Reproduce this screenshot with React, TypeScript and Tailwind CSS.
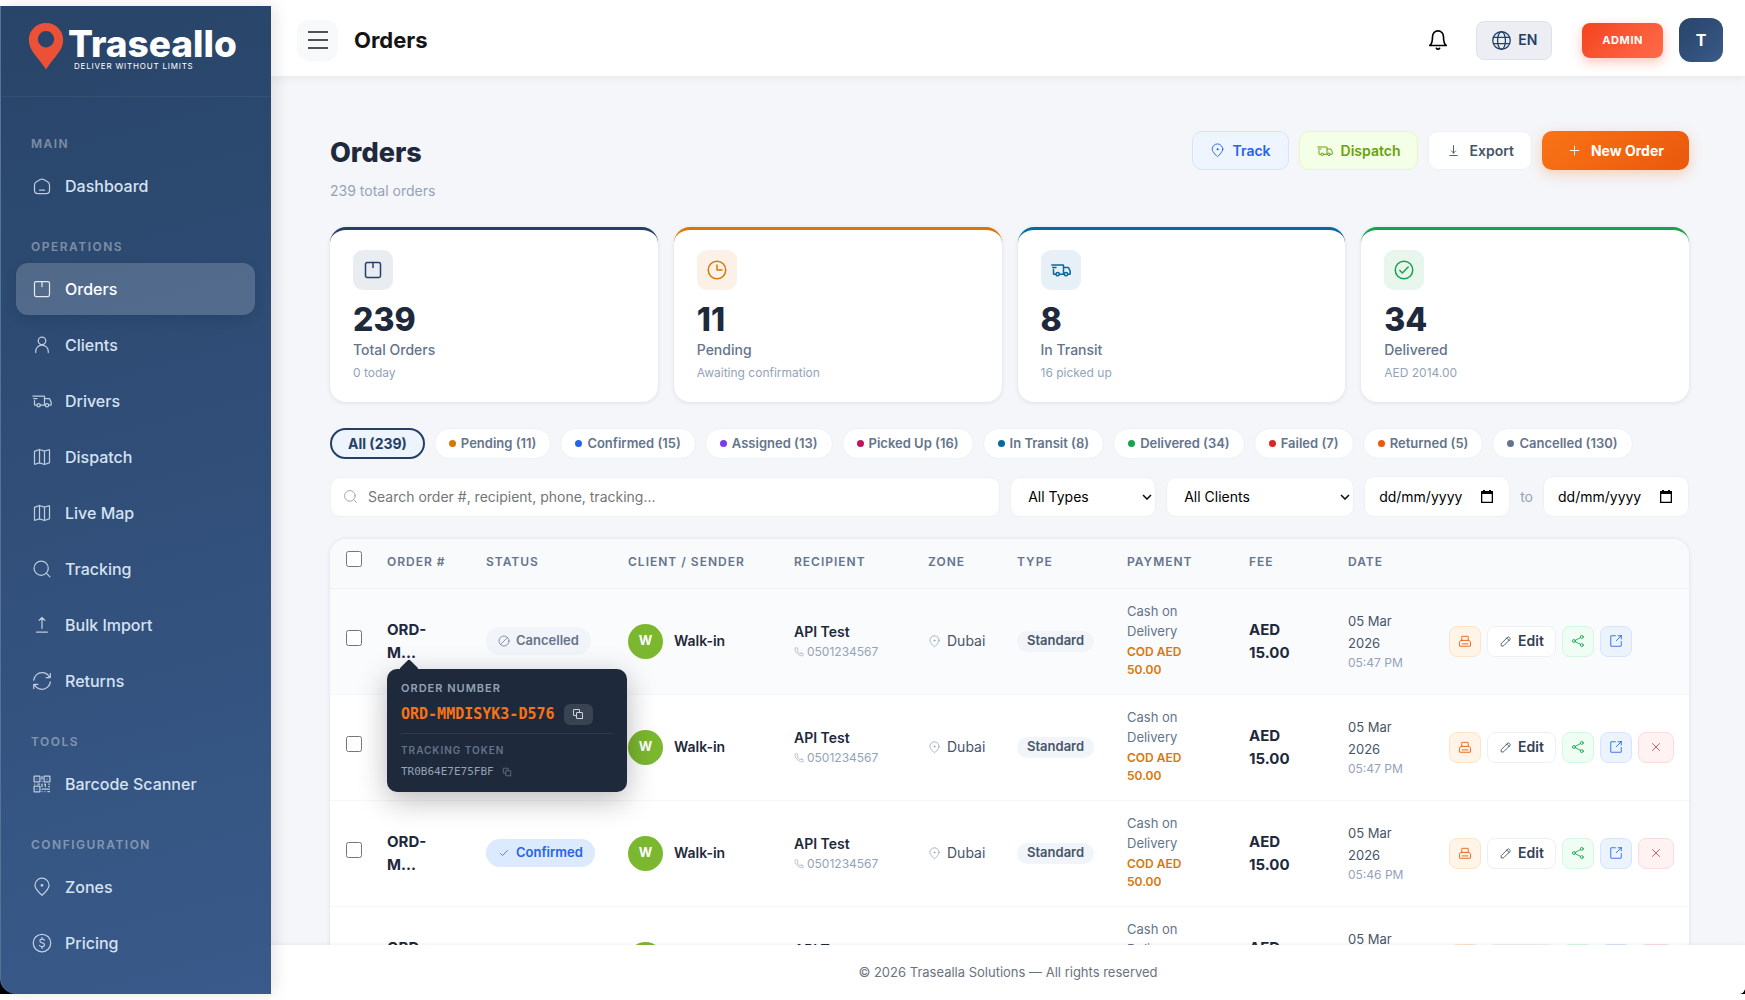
import { useState } from "react";
import type { ReactNode } from "react";

type IconProps = { className?: string; children?: ReactNode; strokeWidth?: number };

function Icon({ className = "size-5", strokeWidth = 1.5, children }: IconProps) {
  return (
    <svg
      viewBox="0 0 24 24"
      fill="none"
      stroke="currentColor"
      strokeWidth={strokeWidth}
      strokeLinecap="round"
      strokeLinejoin="round"
      aria-hidden="true"
      className={`shrink-0 ${className}`}
    >
      {children}
    </svg>
  );
}

const HomeIcon = (p: IconProps) => (
  <Icon {...p}>
    <path d="M17 21H7a4 4 0 0 1-4-4v-6.292a4 4 0 0 1 1.927-3.421l5-3.03a4 4 0 0 1 4.146 0l5 3.03A4 4 0 0 1 21 10.707V17a4 4 0 0 1-4 4ZM9 17h6" />
  </Icon>
);
const BoxIcon = (p: IconProps) => (
  <Icon {...p}>
    <rect x="3" y="3" width="18" height="18" rx="2" />
    <path d="M12 3v6" />
  </Icon>
);
const UserIcon = (p: IconProps) => (
  <Icon {...p}>
    <path d="M4.5 21v-1.500a7.500 7.500 0 0 1 15 0V21" />
    <circle cx="12" cy="7" r="4.5" />
  </Icon>
);
const TruckIcon = (p: IconProps) => (
  <Icon {...p}>
    <circle cx="8" cy="17" r="2" />
    <circle cx="18" cy="17" r="2" />
    <path d="M10.05 17H15V6.6a.6.6 0 0 0-.6-.6H1M5.65 17H3.6a.6.6 0 0 1-.6-.6v-4.9M2 9h4M15 9h5.61a.6.6 0 0 1 .548.356l1.79 4.028a.6.6 0 0 1 .052.243V16.4a.6.6 0 0 1-.6.6h-1.9M15 17h1" />
  </Icon>
);
const MapIcon = (p: IconProps) => (
  <Icon {...p}>
    <path d="m9 19-5.21 1.737a.6.6 0 0 1-.79-.57V5.433a.6.6 0 0 1 .41-.57L9 3m0 16 6 2m-6-2V3m6 18 5.59-1.863a.6.6 0 0 0 .41-.57V3.832a.6.6 0 0 0-.79-.569L15 5m0 16V5m0 0L9 3" />
  </Icon>
);
const SearchIcon = (p: IconProps) => (
  <Icon {...p}>
    <path d="m17 17 4.500 4.500" />
    <circle cx="11" cy="11" r="8.500" />
  </Icon>
);
const UploadIcon = (p: IconProps) => (
  <Icon {...p}>
    <path d="M5.500 20.500h13M12 16V3m0 0 3.500 3.500M12 3 8.500 6.500" />
  </Icon>
);
const DownloadIcon = (p: IconProps) => (
  <Icon {...p}>
    <path d="M6 20h12M12 4v12m0 0 3.500-3.500M12 16l-3.500-3.500" />
  </Icon>
);
const RefreshIcon = (p: IconProps) => (
  <Icon {...p}>
    <path d="M21.168 8A10.003 10.003 0 0 0 12 2C6.815 2 2.55 5.947 2.05 11M17 8h4.4a.6.6 0 0 0 .6-.6V3M2.881 16c1.544 3.532 5.068 6 9.168 6 5.186 0 9.45-3.947 9.951-9M7.05 16h-4.4a.6.6 0 0 0-.6.6V21" />
  </Icon>
);
const QrIcon = (p: IconProps) => (
  <Icon {...p}>
    <rect x="2.500" y="2.500" width="7" height="7" rx="0.6" />
    <rect x="14.500" y="2.500" width="7" height="7" rx="0.6" />
    <rect x="2.500" y="14.500" width="7" height="7" rx="0.6" />
    <path d="M6 6h.01M18 6h.01M6 18h.01M12 3v3M12 9v.01M3 12h.01M7 12h2M12 12v3M15 12h1M16 12v3M20 12h1M12 18h9M12 21h.01M15.500 21h.01M19 21h2M20 15h1" />
  </Icon>
);
const PinIcon = (p: IconProps) => (
  <Icon {...p}>
    <path d="M20.500 10c0 4.418-8.500 12-8.500 12s-8.500-7.582-8.500-12a8.500 8.500 0 1 1 17 0Z" />
    <circle cx="12" cy="10" r="1" fill="currentColor" />
  </Icon>
);
const DollarIcon = (p: IconProps) => (
  <Icon {...p}>
    <circle cx="12" cy="12" r="10.500" />
    <path d="M15 8.500c-.685-.685-1.891-1.161-3-1.191M9 15c.644.86 1.843 1.35 3 1.391m0-9.082c-1.32-.036-2.500.561-2.500 2.191 0 3 5.500 1.500 5.500 4.500 0 1.711-1.464 2.446-3 2.391m0-9.082V5.500m0 10.891V18.500" />
  </Icon>
);
const BellIcon = (p: IconProps) => (
  <Icon {...p}>
    <path d="M18 8.400c0-1.697-.632-3.325-1.757-4.525C15.117 2.675 13.590 2 12 2s-3.117.674-4.243 1.875C6.632 5.075 6 6.703 6 8.400 6 15.867 3 18 3 18h18s-3-2.133-3-9.600ZM13.730 21a2 2 0 0 1-3.460 0" />
  </Icon>
);
const GlobeIcon = (p: IconProps) => (
  <Icon {...p}>
    <circle cx="12" cy="12" r="10" />
    <ellipse cx="12" cy="12" rx="4.500" ry="10" />
    <path d="M3 8.500h18M3 15.500h18" />
  </Icon>
);
const ClockIcon = (p: IconProps) => (
  <Icon {...p}>
    <circle cx="12" cy="12" r="10.500" />
    <path d="M12 6v6h6" />
  </Icon>
);
const CheckCircleIcon = (p: IconProps) => (
  <Icon {...p}>
    <circle cx="12" cy="12" r="10.500" />
    <path d="m7 12.500 3 3 7-7" />
  </Icon>
);
const CheckIcon = (p: IconProps) => (
  <Icon {...p}>
    <path d="m5 13 4 4L19 7" />
  </Icon>
);
const ProhibitIcon = (p: IconProps) => (
  <Icon {...p}>
    <circle cx="12" cy="12" r="10" />
    <path d="M19 5 5 19" />
  </Icon>
);
const PlusIcon = (p: IconProps) => (
  <Icon {...p}>
    <path d="M5 12h14M12 5v14" />
  </Icon>
);
const CloseIcon = (p: IconProps) => (
  <Icon {...p}>
    <path d="m5 5 14 14M19 5 5 19" />
  </Icon>
);
const PhoneIcon = (p: IconProps) => (
  <Icon {...p}>
    <path d="m18.118 14.702-4.118.798c-2.782-1.396-4.500-3-5.500-5.500l.770-4.130L7.815 2H4.064C2.936 2 2.048 2.932 2.217 4.047c.420 2.783 1.660 7.830 5.283 11.453 3.805 3.805 9.286 5.456 12.302 6.113 1.165.253 2.198-.655 2.198-1.848v-3.584l-3.882-1.479Z" />
  </Icon>
);
const PrinterIcon = (p: IconProps) => (
  <Icon {...p}>
    <path d="M6.500 11V4.600a.6.6 0 0 1 .6-.6h9.800a.6.6 0 0 1 .6.6V11M6.500 11h11c2.500 0 4 1.500 4 4v5.400a.6.6 0 0 1-.6.6H3.100a.6.6 0 0 1-.6-.6V15c0-2.500 1.500-4 4-4ZM7 17h10" />
  </Icon>
);
const PencilIcon = (p: IconProps) => (
  <Icon {...p}>
    <path d="m14.363 5.652 1.480-1.480a2 2 0 0 1 2.829 0l1.414 1.414a2 2 0 0 1 0 2.828l-1.480 1.480m-4.243-4.242-9.616 9.615a2 2 0 0 0-.578 1.238l-.242 2.740a1 1 0 0 0 1.084 1.085l2.740-.242a2 2 0 0 0 1.240-.578l9.615-9.616m-4.243-4.242 4.243 4.242" />
  </Icon>
);
const ShareIcon = (p: IconProps) => (
  <Icon {...p}>
    <circle cx="18.500" cy="5" r="2.500" />
    <circle cx="18.500" cy="19" r="2.500" />
    <circle cx="5" cy="12" r="2.500" />
    <path d="m7.300 10.900 9-4.700M7.300 13.100l9 4.700" />
  </Icon>
);
const OpenIcon = (p: IconProps) => (
  <Icon {...p}>
    <path d="M21 3h-5.500M21 3l-8.500 8.500M21 3v5.500M21 13v7.400a.6.6 0 0 1-.6.6H3.600a.6.6 0 0 1-.6-.6V3.600a.6.6 0 0 1 .6-.6H11" />
  </Icon>
);
const CopyIcon = (p: IconProps) => (
  <Icon {...p}>
    <path d="M20.400 21H9.600a.6.6 0 0 1-.6-.6V9.600a.6.6 0 0 1 .6-.6h10.800a.6.6 0 0 1 .6.6v10.800a.6.6 0 0 1-.6.6ZM15 9V3.600a.6.6 0 0 0-.6-.6H3.600a.6.6 0 0 0-.6.6v10.800a.6.6 0 0 0 .6.6H9" />
  </Icon>
);

const navSections = [
  { title: "Main", items: [{ label: "Dashboard", icon: HomeIcon }] },
  {
    title: "Operations",
    items: [
      { label: "Orders", icon: BoxIcon },
      { label: "Clients", icon: UserIcon },
      { label: "Drivers", icon: TruckIcon },
      { label: "Dispatch", icon: MapIcon },
      { label: "Live Map", icon: MapIcon },
      { label: "Tracking", icon: SearchIcon },
      { label: "Bulk Import", icon: UploadIcon },
      { label: "Returns", icon: RefreshIcon },
    ],
  },
  { title: "Tools", items: [{ label: "Barcode Scanner", icon: QrIcon }] },
  {
    title: "Configuration",
    items: [
      { label: "Zones", icon: PinIcon },
      { label: "Pricing", icon: DollarIcon },
    ],
  },
];

const stats = [
  { value: "239", label: "Total Orders", sub: "0 today", icon: BoxIcon, border: "border-[#244066]", tint: "bg-[#e9ecf0] text-[#244066]" },
  { value: "11", label: "Pending", sub: "Awaiting confirmation", icon: ClockIcon, border: "border-[#d97706]", tint: "bg-[#fbf1e6] text-[#d97706]" },
  { value: "8", label: "In Transit", sub: "16 picked up", icon: TruckIcon, border: "border-[#0369a1]", tint: "bg-[#e6f0f6] text-[#0369a1]" },
  { value: "34", label: "Delivered", sub: "AED 2014.00", icon: CheckCircleIcon, border: "border-[#16a34a]", tint: "bg-[#e8f6ed] text-[#16a34a]" },
];

const filters = [
  { label: "Pending", count: 11, dot: "bg-[#d97706]" },
  { label: "Confirmed", count: 15, dot: "bg-[#2563eb]" },
  { label: "Assigned", count: 13, dot: "bg-[#7c3aed]" },
  { label: "Picked Up", count: 16, dot: "bg-[#be185d]" },
  { label: "In Transit", count: 8, dot: "bg-[#0369a1]" },
  { label: "Delivered", count: 34, dot: "bg-[#16a34a]" },
  { label: "Failed", count: 7, dot: "bg-[#dc2626]" },
  { label: "Returned", count: 5, dot: "bg-[#ea580c]" },
  { label: "Cancelled", count: 130, dot: "bg-[#64748b]" },
];

const orders = [
  { id: 1, status: "Cancelled", time: "05:47 PM" },
  { id: 2, status: "Confirmed", time: "05:47 PM" },
  { id: 3, status: "Confirmed", time: "05:46 PM" },
  { id: 4, status: "Confirmed", time: "05:46 PM" },
];

const columns = [
  { title: "", width: "w-[41px]" },
  { title: "Order #", width: "w-[99px]" },
  { title: "Status", width: "w-[142px]" },
  { title: "Client / Sender", width: "w-[166px]" },
  { title: "Recipient", width: "w-[134px]" },
  { title: "Zone", width: "w-[89px]" },
  { title: "Type", width: "w-[110px]" },
  { title: "Payment", width: "w-[122px]" },
  { title: "Fee", width: "w-[99px]" },
  { title: "Date", width: "w-[101px]" },
  { title: "", width: "w-[256px]" },
];

function Sidebar() {
  return (
    <aside className="relative z-20 w-[271px] shrink-0 overflow-hidden rounded-bl-2xl border-l border-[#56719a] bg-linear-165 from-[#284468] to-[#395a8a] shadow-[4px_0_16px_rgba(0,0,0,0.1)]">
      <div className="flex h-[91px] items-start gap-1 border-b border-white/5 pt-4 pl-[27px]">
        <svg viewBox="0 0 36 48" className="h-12 w-9 shrink-0" aria-hidden="true">
          <path fill="#ea5136" fillRule="evenodd" d="M18 1C8.300 1 .8 8.500.8 17.800.8 29 10.500 35.500 18 47.500 25.500 35.500 35.200 29 35.200 17.800 35.200 8.500 27.700 1 18 1Zm0 8a8.200 8.200 0 1 1 0 16.400A8.200 8.200 0 0 1 18 9Z" />
        </svg>
        <div className="text-white">
          <div className="pt-1 text-[37px] leading-9 font-extrabold">Traseallo</div>
          <div className="-mt-0.5 pl-1.5 text-[8px] leading-3 tracking-widest">DELIVER WITHOUT LIMITS</div>
        </div>
      </div>

      <nav className="pt-[19px] pr-4 pl-[15px]">
        {navSections.map((section) => (
          <div key={section.title} className="pt-4">
            <div className="mb-1 px-[15px] text-xs leading-6 font-semibold tracking-[1.5px] text-white/40 uppercase">{section.title}</div>
            <div className="flex flex-col gap-1 pb-[7px]">
              {section.items.map(({ label, icon: NavIcon }) => (
                <a
                  key={label}
                  href="#"
                  className={`flex h-[52px] items-center gap-[13px] rounded-xl px-4 text-base font-medium ${
                    label === "Orders" ? "bg-white/18 text-white shadow-[0_4px_12px_rgba(0,0,0,0.1)]" : "text-[#d6e2f2]"
                  }`}
                >
                  <NavIcon className="size-5 opacity-85" />
                  {label}
                </a>
              ))}
            </div>
          </div>
        ))}
      </nav>
    </aside>
  );
}

function TopBar() {
  return (
    <header className="z-10 flex h-[70px] shrink-0 items-center bg-white pr-[22px] pb-0.5 pl-[26px] shadow-[0_2px_10px_rgba(0,0,0,0.06)]">
      <button type="button" aria-label="Toggle menu" className="flex size-[41px] items-center justify-center rounded-xl bg-[#f8f9fb]">
        <svg viewBox="0 0 20 18" className="h-[18px] w-5" stroke="#1a1a1a" strokeWidth="1.600" aria-hidden="true">
          <path d="M0 1h20M0 9h20M0 17h20" />
        </svg>
      </button>
      <div className="ml-4 text-[22px] font-bold text-[#141414]">Orders</div>

      <div className="ml-auto flex items-center">
        <button type="button" aria-label="Notifications" className="mr-[27px] text-black">
          <BellIcon className="size-[22px]" strokeWidth={1.8} />
        </button>
        <button type="button" className="mr-[30px] flex h-[39px] items-center gap-1.5 rounded-lg border border-[#dde1e8] bg-[#eceef3] px-[14px] text-sm font-semibold text-[#244066]">
          <GlobeIcon className="size-[21px]" />
          EN
        </button>
        <span className="mr-4 flex h-[35px] items-center rounded-lg bg-linear-135 from-[#f4431c] to-[#ff6a4a] px-5 text-[11px] font-bold tracking-wider text-white shadow-[0_4px_12px_rgba(244,67,28,0.3)]">
          ADMIN
        </span>
        <button type="button" className="flex size-11 items-center justify-center rounded-xl bg-linear-135 from-[#284468] to-[#395a8a] text-base font-bold text-white">
          T
        </button>
      </div>
    </header>
  );
}

function OrderTooltip() {
  return (
    <div className="absolute top-20 left-4 z-10 w-60 rounded-[10px] bg-[#1e293b] px-3.5 pt-[11px] pb-2.5 font-normal shadow-[0_8px_30px_rgba(0,0,0,0.28)]">
      <div className="absolute -top-[7px] left-[15px] size-3.5 rotate-45 rounded-xs bg-[#1e293b]" />
      <div className="text-[11px] leading-4 font-semibold tracking-[1px] text-[#94a3b8] uppercase">Order Number</div>
      <div className="mt-2 flex items-center gap-[9px] border-b border-white/8 pb-2">
        <span className="font-[DejaVu_Sans_Mono,monospace] text-[15px] leading-5 font-bold text-[#f97316]">ORD-MMDISYK3-D576</span>
        <button type="button" aria-label="Copy order number" className="flex h-[21px] w-[29px] shrink-0 items-center justify-center rounded-md bg-white/12 text-[#cbd5e1]">
          <CopyIcon className="size-3" strokeWidth={2} />
        </button>
      </div>
      <div className="mt-2 text-[10px] leading-4 font-semibold tracking-[1px] text-[#64748b] uppercase">Tracking Token</div>
      <div className="mt-1 flex items-center gap-2 text-[#94a3b8]">
        <span className="font-[DejaVu_Sans_Mono,monospace] text-[11px] leading-5">TR0B64E7E75FBF</span>
        <button type="button" aria-label="Copy tracking token" className="text-[#64748b]">
          <CopyIcon className="size-2.5" strokeWidth={2} />
        </button>
      </div>
    </div>
  );
}

function OrderRow({ order, showTooltip }: { order: (typeof orders)[number]; showTooltip: boolean }) {
  const cancelled = order.status === "Cancelled";
  const iconButton = "flex h-[31px] w-8 items-center justify-center rounded-lg border";

  return (
    <tr className={`border-b border-[#f6f7fa] ${showTooltip ? "bg-[#fafbfd]" : "bg-white"}`}>
      <td className="px-4">
        <input type="checkbox" aria-label={`Select order ${order.id}`} className="mb-1.5 block size-4" />
      </td>
      <td className="relative pl-4 text-[15px] leading-[23px] font-bold text-[#1e293b]">
        <div className="w-12">ORD-M...</div>
        {showTooltip && <OrderTooltip />}
      </td>
      <td className="pl-4">
        <span
          className={`inline-flex h-7 items-center gap-1.5 rounded-full px-3 align-middle text-[13px] font-semibold ${
            cancelled ? "bg-[#f1f5f9] text-[#64748b]" : "bg-[#dbeafe] text-[#2563eb]"
          }`}
        >
          {cancelled ? <ProhibitIcon className="size-3" /> : <CheckIcon className="size-3" />}
          {order.status}
        </span>
      </td>
      <td className="pl-4">
        <div className="flex items-center gap-[11px]">
          <span className="flex size-[35px] items-center justify-center rounded-full bg-[#7cb82f] text-[13px] font-bold text-white">W</span>
          <span className="text-sm font-semibold text-[#1e293b]">Walk-in</span>
        </div>
      </td>
      <td className="pt-0.5 pl-4">
        <div className="text-sm leading-5 font-semibold text-[#1e293b]">API Test</div>
        <div className="flex items-center gap-[3px] text-xs leading-5 text-[#94a3b8]">
          <PhoneIcon className="size-2.5" />
          0501234567
        </div>
      </td>
      <td className="pl-4">
        <div className="flex items-center gap-1.5 text-sm text-[#475569]">
          <PinIcon className="size-[13px] text-[#94a3b8]" />
          Dubai
        </div>
      </td>
      <td className="pl-4">
        <div className="flex">
          <span className="flex h-[21px] items-center rounded-full bg-[#f1f5f9] px-2.5 text-[13px] font-semibold text-[#475569]">Standard</span>
        </div>
      </td>
      <td className="pt-3 pb-[15px] pl-4">
        <div className="w-16 text-[13px] leading-5 text-[#64748b]">Cash on Delivery</div>
        <div className="mt-0.5 w-16 text-xs leading-[18px] font-semibold text-[#d97706]">COD AED 50.00</div>
      </td>
      <td className="pl-4 text-[15px] leading-[23px] font-bold text-[#1e293b]">
        <div className="w-12">AED 15.00</div>
      </td>
      <td className="pl-4">
        <div className="w-12 text-[13px] leading-[22px] text-[#475569]">05 Mar 2026</div>
        <div className="text-xs leading-[18px] text-[#94a3b8]">{order.time}</div>
      </td>
      <td className="pl-4">
        <div className="flex items-center gap-1.5">
          <button type="button" aria-label="Print" className={`${iconButton} border-[#fde3c8] bg-[#fff4e8] text-[#ea580c]`}>
            <PrinterIcon className="size-3.5" />
          </button>
          <button type="button" className="flex h-[31px] items-center gap-1.5 rounded-lg border border-[#edf0f4] bg-white px-[11px] text-sm font-semibold text-[#334155]">
            <PencilIcon className="size-[13px]" />
            Edit
          </button>
          <button type="button" aria-label="Share" className={`${iconButton} border-[#d3f8df] bg-[#effdf4] text-[#16a34a]`}>
            <ShareIcon className="size-3.5" />
          </button>
          <button type="button" aria-label="Open" className={`${iconButton} border-[#d5e5fd] bg-[#ebf3ff] text-[#2563eb]`}>
            <OpenIcon className="size-3.5" />
          </button>
          {!cancelled && (
            <button type="button" aria-label="Delete" className="flex h-[31px] w-9 items-center justify-center rounded-lg border border-[#fbdcdc] bg-[#fff2f2] text-[#dc2626]">
              <CloseIcon className="size-3" />
            </button>
          )}
        </div>
      </td>
    </tr>
  );
}

function FilterSelect({ label, options, className }: { label: string; options: string[]; className: string }) {
  return (
    <div className={`relative ${className}`}>
      <select aria-label={label} className="h-10 w-full appearance-none rounded-[10px] border border-[#eef0f4] bg-white px-[17px] text-sm text-black">
        {options.map((o) => (
          <option key={o}>{o}</option>
        ))}
      </select>
      <svg viewBox="0 0 10 6" fill="none" stroke="#111" strokeWidth="1.600" className="pointer-events-none absolute top-[17px] right-1 h-1.5 w-2.5" aria-hidden="true">
        <path d="m1 1 4 4 4-4" />
      </svg>
    </div>
  );
}

function DateField({ label }: { label: string }) {
  const [value, setValue] = useState("");
  return (
    <div className="flex h-[41px] w-[146px] shrink-0 items-center rounded-[10px] border border-[#eef0f4] bg-white pr-4 pl-3.5">
      <input
        type="text"
        aria-label={label}
        placeholder="dd/mm/yyyy"
        value={value}
        onChange={(e) => setValue(e.target.value)}
        className="min-w-0 flex-1 text-sm text-black outline-none placeholder:text-black"
      />
      <svg viewBox="0 0 12 13" className="h-[13px] w-3 shrink-0" aria-hidden="true">
        <path fill="#000" fillRule="evenodd" d="M2 0h2v1h4V0h2v1h2v12H0V1h2V0ZM1.300 4v7.700h9.400V4h-9.400Z" />
      </svg>
    </div>
  );
}

export default function App() {
  const [search, setSearch] = useState("");
  const actionButton = "flex h-[39px] items-center gap-2 rounded-[10px] border text-sm font-semibold";

  return (
    <div className="h-screen bg-white py-1.5 font-[Inter,sans-serif] text-[#1e293b]">
      <div className="flex h-full bg-black">
        <Sidebar />
        <div className="flex min-w-0 flex-1 flex-col overflow-hidden rounded-br-md bg-[#f4f6fa]">
          <TopBar />

          <main className="min-h-0 flex-1 overflow-hidden pt-[55px] pr-14 pl-[59px]">
            <div className="flex items-start justify-between">
              <div>
                <h1 className="pt-1 text-[27px] leading-9 font-extrabold">Orders</h1>
                <p className="mt-2 text-sm leading-6 text-[#94a3b8]">239 total orders</p>
              </div>
              <div className="flex gap-2.5">
                <button type="button" className={`${actionButton} border-[#d3e4fb] bg-[#eef5ff] px-[17px] text-[#2563eb]`}>
                  <PinIcon className="size-[15px]" />
                  Track
                </button>
                <button type="button" className={`${actionButton} border-[#e4f7c5] bg-[#f5fee7] px-[17px] text-[#65a30d]`}>
                  <TruckIcon className="size-4" />
                  Dispatch
                </button>
                <button type="button" className={`${actionButton} border-[#eef0f4] bg-white px-[17px] text-[#475569]`}>
                  <DownloadIcon className="size-[15px]" />
                  Export
                </button>
                <button type="button" className="flex h-[39px] items-center gap-[9px] rounded-[10px] bg-linear-135 from-[#f97316] to-[#ea580c] px-[25px] text-sm font-bold text-white shadow-[0_4px_14px_rgba(249,115,22,0.3)]">
                  <PlusIcon className="size-[15px]" />
                  New Order
                </button>
              </div>
            </div>

            {/* Stat cards */}
            <div className="mt-6 grid grid-cols-4 gap-4">
              {stats.map(({ value, label, sub, icon: StatIcon, border, tint }) => (
                <div key={label} className={`h-[175px] rounded-2xl border-t-[3px] bg-white px-[23px] pt-5 shadow-[0_1px_4px_rgba(15,23,42,0.1)] ${border}`}>
                  <div className={`flex size-10 items-center justify-center rounded-[10px] ${tint}`}>
                    <StatIcon className="size-5" strokeWidth={1.8} />
                  </div>
                  <div className="mt-3 text-[32px] leading-9 font-extrabold">{value}</div>
                  <div className="mt-0.5 text-sm leading-5 font-medium text-[#64748b]">{label}</div>
                  <div className="mt-[3px] text-xs leading-5 text-[#94a3b8]">{sub}</div>
                </div>
              ))}
            </div>

            {/* Status filters */}
            <div className="mt-[26px] flex gap-[9px]">
              <button type="button" className="h-[31px] rounded-full border-2 border-[#244066] bg-[#edf4fe] px-4 text-sm leading-none font-bold text-[#244066]">
                All (239)
              </button>
              {filters.map((f) => (
                <button key={f.label} type="button" className="flex h-[31px] items-center gap-[5px] rounded-full border border-[#eef0f4] bg-white px-3.5 text-[13px] font-semibold text-[#64748b]">
                  <span className={`size-[7px] rounded-full ${f.dot}`} />
                  {f.label} ({f.count})
                </button>
              ))}
            </div>

            {/* Search and filters */}
            <div className="mt-[17px] flex items-center gap-2.5">
              <label className="flex h-10 flex-1 items-center gap-2.5 rounded-[10px] border border-[#eef0f4] bg-white px-3">
                <SearchIcon className="size-[15px] text-[#94a3b8]" />
                <input
                  type="text"
                  aria-label="Search orders"
                  placeholder="Search order #, recipient, phone, tracking..."
                  value={search}
                  onChange={(e) => setSearch(e.target.value)}
                  className="w-full text-sm outline-none placeholder:text-[#757575]"
                />
              </label>
              <FilterSelect label="Type" options={["All Types", "Standard"]} className="w-[146px]" />
              <FilterSelect label="Client" options={["All Clients", "Walk-in"]} className="w-[188px]" />
              <DateField label="From date" />
              <span className="text-sm text-[#94a3b8]">to</span>
              <DateField label="To date" />
            </div>

            {/* Orders table */}
            <div className="mt-[22px] overflow-hidden rounded-2xl bg-white shadow-[0_0_4px_rgba(15,23,42,0.1)]">
              <table className="w-full table-fixed border-collapse text-left">
                <thead>
                  <tr className="h-[49px] border-b border-[#eef1f5] bg-[#f9fafc] text-xs text-[#64748b]">
                    {columns.map((c, i) => (
                      <th key={i} className={`pb-0.5 pl-4 font-semibold tracking-[1px] uppercase ${c.width}`}>
                        {i === 0 ? <input type="checkbox" aria-label="Select all orders" className="mb-1.5 block size-4" /> : c.title}
                      </th>
                    ))}
                  </tr>
                </thead>
                <tbody>
                  {orders.map((order) => (
                    <OrderRow key={order.id} order={order} showTooltip={order.id === 1} />
                  ))}
                </tbody>
              </table>
            </div>
          </main>

          <footer className="z-10 flex h-[49px] shrink-0 items-center justify-center rounded-br-md bg-white pt-1.5 text-[13px] text-[#6b7280] shadow-[0_-1px_4px_rgba(0,0,0,0.06)]">
            © 2026 Trasealla Solutions — All rights reserved
          </footer>
        </div>
      </div>
    </div>
  );
}
